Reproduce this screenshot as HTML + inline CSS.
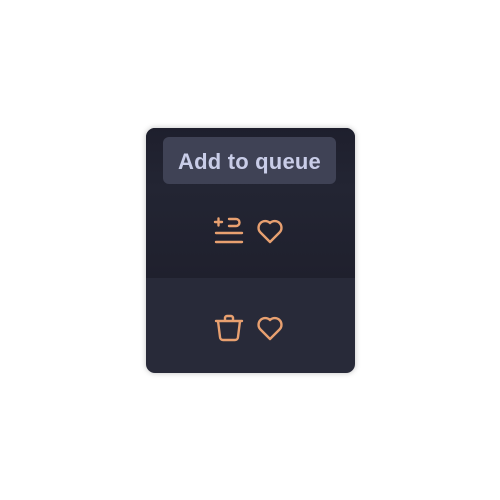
<!DOCTYPE html><html><head><style>
body{margin:0;width:500px;height:500px;background:#fff;position:relative;overflow:hidden;font-family:"Liberation Sans",sans-serif}
.card{position:absolute;left:146px;top:128px;width:209px;height:245px;border-radius:9px;overflow:hidden;background:#282a39;box-shadow:0 0 6px rgba(0,0,0,.25)}
.top{position:absolute;left:0;top:0;width:100%;height:150px;background:linear-gradient(#1e1f2d,#232533 40%,#1f202d)}
.tip{position:absolute;left:17px;top:9px;width:173px;height:47px;border-radius:6px;background:#3f4255;color:#c9cde8;font-size:22px;font-weight:bold;line-height:50px;text-align:center;letter-spacing:0.2px}
svg{position:absolute}
</style></head><body>
<div class="card"><div class="top"></div><div class="tip">Add to queue</div></div>
<svg width="500" height="500" style="left:0;top:0" fill="none" stroke="#e8a070" stroke-width="2.4" stroke-linecap="round" stroke-linejoin="round">
<path d="M215 222h7M218.5 218.5v7M229 219h7a3.5 3.5 0 0 1 0 7h-7M216 233h26M216 242h26"/>
<path d="M270 242l-9.5-9.5a5.5 5.5 0 0 1 9.5-9.5a5.5 5.5 0 0 1 9.5 9.5z"/>
<path d="M216 321h26M225 321v-3a2 2 0 0 1 2-2h4a2 2 0 0 1 2 2v3M218 321l2 16a3 3 0 0 0 3 3h12a3 3 0 0 0 3-3l2-16"/>
<path d="M270 339l-9.5-9.5a5.5 5.5 0 0 1 9.5-9.5a5.5 5.5 0 0 1 9.5 9.5z"/>
</svg>
</body></html>
